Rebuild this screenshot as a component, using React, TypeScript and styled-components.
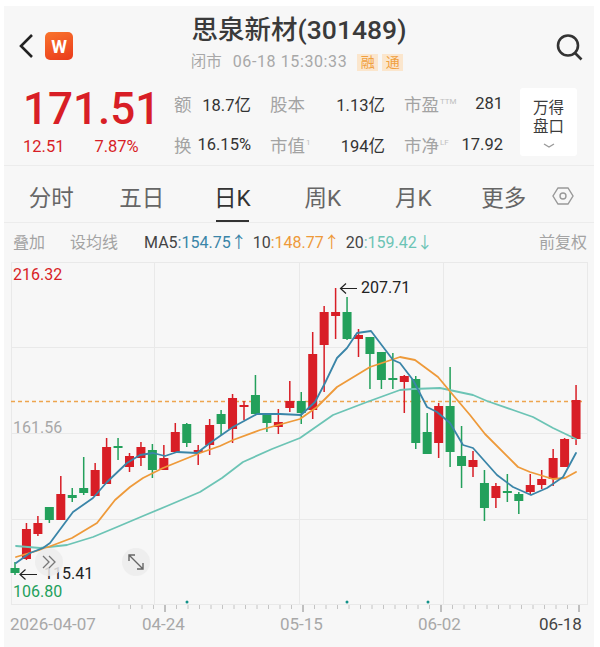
import styled, { createGlobalStyle } from "styled-components";

const RED = "#d81e26";
const GREEN = "#23a05b";
const BLUE = "#3a85a8";
const ORANGE = "#ee9a3a";
const TEAL = "#6cc4b5";

const GlobalStyle = createGlobalStyle`
  html, body {
    margin: 0;
    padding: 0;
    background: #fff;
  }
  body {
    font-family: Roboto, "Noto Sans CJK SC", sans-serif;
  }
`;

const Page = styled.div`
  box-sizing: border-box;
  width: 590px;
  height: 641px;
  margin: 6px 0 0 4px;
  background: #f7f7f7;
  overflow: hidden;
  color: #333;
`;

const TopBar = styled.header`
  position: relative;
  height: 72px;
  display: flex;
  flex-direction: column;
  align-items: center;
`;

const BackGroup = styled.div`
  position: absolute;
  left: 14px;
  top: 26px;
  display: flex;
  align-items: center;
  gap: 11px;
`;

const Logo = styled.div`
  width: 28px;
  height: 28px;
  border-radius: 5px;
  background: linear-gradient(160deg, #f9742c, #ea3a1c);
  color: #fff;
  font-size: 18px;
  font-weight: 700;
  display: flex;
  align-items: center;
  justify-content: center;
`;

const SearchBox = styled.div`
  position: absolute;
  right: 11px;
  top: 27px;
  display: flex;
`;

const StockName = styled.h1`
  margin: 7px 0 0 0;
  font-size: 26.5px;
  line-height: 34px;
  font-weight: 500;
  color: #3a3a3a;
`;

const StatusLine = styled.div`
  margin-top: 6px;
  display: flex;
  align-items: center;
  font-size: 15.5px;
  line-height: 18px;
  color: #a8a8a8;
`;

const StatusText = styled.span<{ $gap: number; $spaced?: boolean }>`
  margin-right: ${(props) => props.$gap}px;
  font-size: ${(props) => (props.$spaced ? "16px" : "15.5px")};
  letter-spacing: ${(props) => (props.$spaced ? "0.6px" : "0")};
`;

const Badge = styled.span`
  width: 21px;
  height: 17px;
  margin-right: 4px;
  background: #fbe6cd;
  color: #f0a040;
  font-size: 14px;
  line-height: 17px;
  text-align: center;
`;

const Quote = styled.section`
  box-sizing: border-box;
  height: 88px;
  padding-top: 6px;
  display: flex;
  border-bottom: 1px solid #ececec;
`;

const PriceCol = styled.div`
  width: 170px;
  padding-left: 19px;
  box-sizing: border-box;
  color: ${RED};
`;

const Price = styled.div`
  font-size: 44px;
  line-height: 50px;
  font-weight: 500;
`;

const Change = styled.div`
  margin-top: 3px;
  display: flex;
  gap: 30px;
  font-size: 16.5px;
  line-height: 20px;
`;

const StatGroup = styled.div`
  display: grid;
  grid-template-columns: 77px 134px 118px;
  grid-template-rows: 41px 41px;
  width: 329px;
  margin-top: -1px;
  align-items: center;
  font-size: 16.5px;
`;

const StatCell = styled.div<{ $pad: number }>`
  display: flex;
  justify-content: space-between;
  align-items: center;
  padding-left: ${(props) => props.$pad}px;
  white-space: nowrap;
`;

const StatLabel = styled.span`
  color: #a3a3a3;
  font-size: 17.5px;
`;

const Sup = styled.sup`
  font-size: 8px;
  line-height: 0;
  color: #c0c0c0;
  vertical-align: 7px;
  margin-left: 1px;
`;

const StatValue = styled.span`
  color: #333;
`;

const DepthButton = styled.div`
  width: 57px;
  height: 68px;
  margin: 4px 0 0 17px;
  background: #fff;
  border-radius: 3px;
  display: flex;
  flex-direction: column;
  align-items: center;
  padding-top: 11px;
  box-sizing: border-box;
  font-size: 15.5px;
  line-height: 19px;
  color: #3c3c3c;
`;

const DepthChevron = styled.svg`
  margin-top: 5px;
`;

const Tabs = styled.nav`
  box-sizing: border-box;
  height: 57px;
  padding-left: 2px;
  display: flex;
  border-bottom: 1px solid #ececec;
`;

const Tab = styled.div<{ $active?: boolean }>`
  position: relative;
  box-sizing: border-box;
  width: 90.5px;
  height: 56px;
  padding-top: 3px;
  display: flex;
  align-items: center;
  justify-content: center;
  font-size: 22.5px;
  color: ${(props) => (props.$active ? "#333" : "#666")};
  &::after {
    content: "";
    display: ${(props) => (props.$active ? "block" : "none")};
    position: absolute;
    left: 29px;
    bottom: 0;
    width: 33px;
    height: 2px;
    background: #333;
  }
`;

const TabIcon = styled.div`
  flex: 1;
  display: flex;
  align-items: center;
  justify-content: center;
  padding: 3px 18px 0 0;
`;

const ToolRow = styled.div`
  box-sizing: border-box;
  height: 39px;
  padding: 0 7px 3px 9px;
  display: flex;
  align-items: center;
  font-size: 16px;
  color: #a3a3a3;
`;

const ToolLink = styled.span`
  margin-right: 25px;
`;

const Legend = styled.div`
  flex: 1;
  margin-left: 1px;
  display: flex;
  gap: 6px;
  color: #444;
`;

const LegendValue = styled.span<{ $color: string }>`
  color: ${(props) => props.$color};
`;

const ChartArea = styled.div`
  position: relative;
  height: 350px;
`;

const ChartSvg = styled.svg`
  display: block;
`;

const ChartLabel = styled.span<{ $x: number; $y: number; $color: string }>`
  position: absolute;
  left: ${(props) => props.$x}px;
  top: ${(props) => props.$y}px;
  font-size: 16px;
  line-height: 20px;
  color: ${(props) => props.$color};
`;

const RoundButton = styled.div<{ $x: number }>`
  position: absolute;
  left: ${(props) => props.$x}px;
  top: 286px;
  width: 28px;
  height: 28px;
  border-radius: 50%;
  background: rgba(236, 236, 236, 0.85);
  display: flex;
  align-items: center;
  justify-content: center;
`;

const DateRow = styled.div`
  padding: 2px 0 0 6px;
  display: grid;
  grid-template-columns: 132px 138px 138px 121px 1fr;
  font-size: 17px;
  line-height: 20px;
  color: #a8a8a8;
`;

const LastDate = styled.span`
  color: #444;
`;

// candle: top of body, bottom of body, top of wick, bottom of wick, colour
const candles: [number, number, number, number, "r" | "g"][] = [
  [568, 573, 562, 575, "g"],
  [529, 559, 523, 560, "r"],
  [523, 534, 516, 536, "r"],
  [507, 520, 507, 523, "g"],
  [494, 520, 476, 520, "r"],
  [495, 498, 488, 502, "g"],
  [488, 493, 457, 495, "g"],
  [470, 496, 463, 496, "r"],
  [447, 484, 438, 484, "r"],
  [446, 448, 438, 460, "g"],
  [456, 467, 453, 472, "r"],
  [447, 458, 442, 466, "r"],
  [450, 470, 444, 478, "g"],
  [458, 470, 445, 470, "r"],
  [432, 452, 423, 452, "r"],
  [424, 443, 423, 447, "g"],
  [450, 453, 445, 465, "r"],
  [425, 445, 419, 455, "r"],
  [414, 424, 410, 435, "g"],
  [398, 429, 394, 443, "r"],
  [405, 407, 401, 420, "r"],
  [395, 414, 375, 414, "g"],
  [414, 423, 414, 432, "g"],
  [422, 427, 409, 434, "r"],
  [401, 408, 381, 412, "r"],
  [401, 413, 392, 424, "g"],
  [354, 410, 332, 419, "r"],
  [312, 345, 306, 392, "r"],
  [312, 316, 288, 339, "r"],
  [312, 339, 297, 340, "g"],
  [335, 339, 329, 357, "r"],
  [337, 354, 337, 389, "g"],
  [352, 380, 352, 389, "g"],
  [378, 379, 353, 389, "g"],
  [376, 382, 375, 413, "r"],
  [379, 443, 376, 449, "g"],
  [432, 454, 413, 454, "g"],
  [406, 443, 403, 458, "r"],
  [406, 452, 367, 467, "g"],
  [456, 466, 426, 488, "g"],
  [460, 467, 451, 477, "r"],
  [483, 508, 470, 521, "g"],
  [486, 498, 483, 508, "r"],
  [491, 493, 474, 502, "g"],
  [494, 501, 492, 514, "g"],
  [485, 492, 474, 495, "r"],
  [479, 485, 470, 489, "r"],
  [458, 479, 449, 486, "r"],
  [439, 467, 438, 467, "r"],
  [400, 439, 385, 445, "r"],
];

const ma5 =
  "16,563 30,553 43,548 50,543 73,512 93,498 107,482 127,463 140,455 153,453 165,456 177,452 197,453 210,443 233,427 257,414 280,414 301,415 315,402 325,383 337,358 347,348 357,333 371,331 393,360 400,363 413,380 427,407 437,412 450,423 463,445 473,448 497,475 513,487 531,495 547,488 563,477 576,453";
const ma10 =
  "16,557 43,549 72,538 97,523 115,500 130,487 143,478 163,468 200,453 220,446 233,440 260,430 300,419 317,407 337,387 370,367 400,357 415,360 438,377 453,395 470,415 485,434 518,467 530,472 553,479 565,478 576,472";
const ma20 =
  "16,546 40,548 67,545 93,537 117,527 143,516 167,506 200,492 222,478 243,462 272,449 300,438 333,415 367,402 400,390 413,389 440,388 473,395 487,401 513,410 533,417 553,428 576,439";

const tickXs = Array.from({ length: 41 }, (_, k) => 119 + k * 11.5);
const majorTicks = [165, 303, 441, 579];

function Chart() {
  return (
    <ChartSvg width="590" height="350" viewBox="4 262 590 350">
      <g stroke="#e9e9e9" strokeWidth="1" fill="none">
        <rect x="11.5" y="262.5" width="576" height="342" />
        <path d="M11 347.5H588M11 433.5H588M11 519.5H588M154.5 262V604M299.5 262V604M443.5 262V604" />
      </g>
      {tickXs.map((x) => (
        <line
          key={x}
          x1={x}
          x2={x}
          y1={605}
          y2={majorTicks.includes(x) ? 612 : 609}
          stroke={majorTicks.includes(x) ? "#888" : "#c4c4c4"}
        />
      ))}
      <line x1="11" x2="583" y1="401.5" y2="401.5" stroke="#eda54e" strokeWidth="1.5" strokeDasharray="4 3" />
      {candles.map(([top, bottom, wickTop, wickBottom, kind], i) => {
        const x = 15 + i * 11.45;
        const color = kind === "r" ? RED : GREEN;
        return (
          <g key={i} fill={color}>
            <rect x={x - 0.75} y={wickTop} width="1.5" height={wickBottom - wickTop} />
            <rect x={x - 4.5} y={top} width="9" height={Math.max(bottom - top, 2)} />
          </g>
        );
      })}
      <g fill="none" strokeWidth="1.8" strokeLinejoin="round" strokeLinecap="round">
        <polyline points={ma20} stroke={TEAL} />
        <polyline points={ma10} stroke={ORANGE} />
        <polyline points={ma5} stroke={BLUE} />
      </g>
      <g fill="#12928a">
        <circle cx="187" cy="602" r="1.5" />
        <circle cx="347" cy="602" r="1.5" />
        <circle cx="428" cy="602" r="1.5" />
      </g>
      <g fill="none" stroke="#222" strokeWidth="1.2">
        <path d="M357 288.5H341M346 283.5L340.5 288.5L346 293.5" />
        <path d="M37 574.5H20.5M25.5 569.5L20 574.5L25.5 579.5" />
      </g>
    </ChartSvg>
  );
}

export default function App() {
  return (
    <>
      <GlobalStyle />
      <Page>
        <TopBar>
          <BackGroup>
            <svg width="16" height="26" viewBox="0 0 16 26" fill="none" stroke="#222" strokeWidth="2.6">
              <path d="M14 2L3 13L14 24" />
            </svg>
            <Logo>W</Logo>
          </BackGroup>
          <StockName>思泉新材(301489)</StockName>
          <StatusLine>
            <StatusText $gap={11}>闭市</StatusText>
            <StatusText $gap={10} $spaced>06-18 15:30:33</StatusText>
            <Badge>融</Badge>
            <Badge>通</Badge>
          </StatusLine>
          <SearchBox>
            <svg width="28" height="28" viewBox="0 0 28 28" fill="none" stroke="#333" strokeWidth="2.6">
              <circle cx="13" cy="12.5" r="10" />
              <path d="M20 20L26.5 26.5" />
            </svg>
          </SearchBox>
        </TopBar>
        <Quote>
          <PriceCol>
            <Price>171.51</Price>
            <Change>
              <span>12.51</span>
              <span>7.87%</span>
            </Change>
          </PriceCol>
          <StatGroup>
            <StatCell $pad={0}>
              <StatLabel>额</StatLabel>
              <StatValue>18.7亿</StatValue>
            </StatCell>
            <StatCell $pad={19}>
              <StatLabel>股本</StatLabel>
              <StatValue>1.13亿</StatValue>
            </StatCell>
            <StatCell $pad={19}>
              <StatLabel>
                市盈<Sup>TTM</Sup>
              </StatLabel>
              <StatValue>281</StatValue>
            </StatCell>
            <StatCell $pad={0}>
              <StatLabel>换</StatLabel>
              <StatValue>16.15%</StatValue>
            </StatCell>
            <StatCell $pad={19}>
              <StatLabel>
                市值<Sup>1</Sup>
              </StatLabel>
              <StatValue>194亿</StatValue>
            </StatCell>
            <StatCell $pad={19}>
              <StatLabel>
                市净<Sup>LF</Sup>
              </StatLabel>
              <StatValue>17.92</StatValue>
            </StatCell>
          </StatGroup>
          <DepthButton>
            <span>万得</span>
            <span>盘口</span>
            <DepthChevron width="14" height="8" viewBox="0 0 14 8" fill="none" stroke="#9a9a9a" strokeWidth="1.4">
              <path d="M2 2L7 5L12 2" />
            </DepthChevron>
          </DepthButton>
        </Quote>
        <Tabs>
          <Tab>分时</Tab>
          <Tab>五日</Tab>
          <Tab $active>日K</Tab>
          <Tab>周K</Tab>
          <Tab>月K</Tab>
          <Tab>更多</Tab>
          <TabIcon>
            <svg width="22" height="20" viewBox="0 0 22 20" fill="none" stroke="#999" strokeWidth="1.4">
              <path d="M6 2H16L21 10L16 18H6L1 10Z" />
              <circle cx="11" cy="10" r="3" />
            </svg>
          </TabIcon>
        </Tabs>
        <ToolRow>
          <ToolLink>叠加</ToolLink>
          <ToolLink>设均线</ToolLink>
          <Legend>
            <span>
              MA5<LegendValue $color={BLUE}>:154.75↑</LegendValue>
            </span>
            <span>
              10<LegendValue $color={ORANGE}>:148.77↑</LegendValue>
            </span>
            <span>
              20<LegendValue $color={TEAL}>:159.42↓</LegendValue>
            </span>
          </Legend>
          <span>前复权</span>
        </ToolRow>
        <ChartArea>
          <Chart />
          <ChartLabel $x={9} $y={3} $color={RED}>216.32</ChartLabel>
          <ChartLabel $x={9} $y={156} $color="#a8a8a8">161.56</ChartLabel>
          <ChartLabel $x={9} $y={320} $color={GREEN}>106.80</ChartLabel>
          <ChartLabel $x={357} $y={16} $color="#222">207.71</ChartLabel>
          <ChartLabel $x={40} $y={302} $color="#222">115.41</ChartLabel>
          <RoundButton $x={31}>
            <svg width="16" height="16" viewBox="0 0 16 16" fill="none" stroke="#777" strokeWidth="1.3">
              <path d="M2 2L8 8L2 14M8 2L14 8L8 14" />
            </svg>
          </RoundButton>
          <RoundButton $x={118}>
            <svg width="18" height="18" viewBox="0 0 18 18" fill="none" stroke="#666" strokeWidth="1.4">
              <path d="M2 2L16 16M2 8V2H8M10 16H16V10" />
            </svg>
          </RoundButton>
        </ChartArea>
        <DateRow>
          <span>2026-04-07</span>
          <span>04-24</span>
          <span>05-15</span>
          <span>06-02</span>
          <LastDate>06-18</LastDate>
        </DateRow>
      </Page>
    </>
  );
}
